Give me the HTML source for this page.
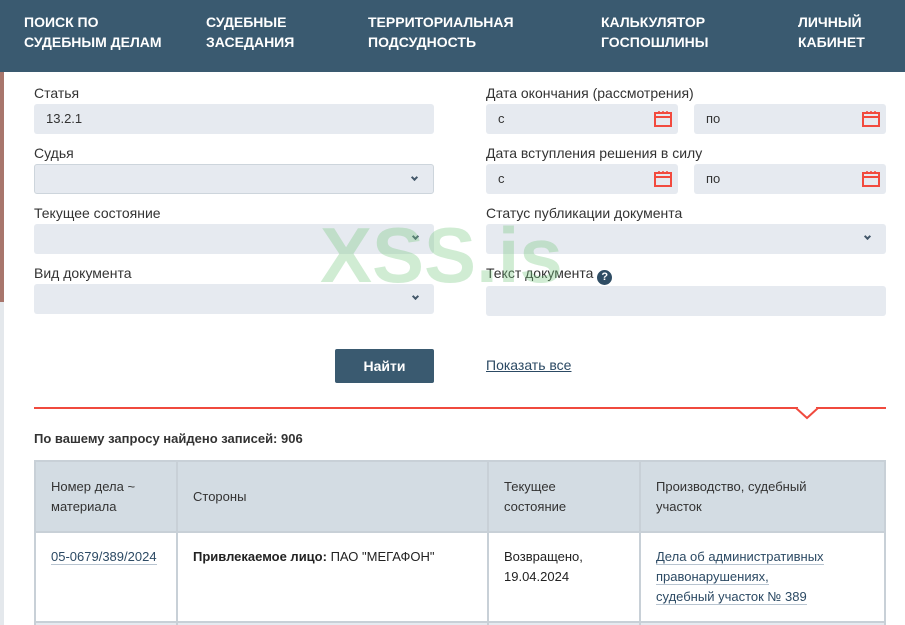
<!DOCTYPE html>
<html style="width:905px;height:625px;overflow:hidden"><head><meta charset="utf-8"><style>
*{box-sizing:border-box;margin:0;padding:0}
body{width:905px;height:625px;overflow:hidden;background:#fff;font-family:"Liberation Sans","DejaVu Sans",sans-serif;position:relative;color:#222}
.hdr{position:absolute;left:0;top:0;width:905px;height:72px;background:#3a5a70}
.nav{position:absolute;top:12px;color:#fff;font-weight:bold;font-size:14px;line-height:20px}
.strip{position:absolute;left:0;top:72px;width:4px;height:230px;background:#a8766c}
.strip2{position:absolute;left:0;top:302px;width:4px;height:323px;background:#e4e8ec}
.lbl{position:absolute;font-size:14px;color:#333}
.inp{position:absolute;height:30px;background:#e6eaf0;border-radius:3px;font-size:13px;line-height:30px;padding-left:12px;color:#333}
.chev{position:absolute;right:16px;top:10px;width:5px;height:5px;border-right:2px solid #44586a;border-bottom:2px solid #44586a;transform:rotate(45deg)}
.cal{position:absolute;right:6px;top:6px}
.btn{position:absolute;left:335px;top:349px;width:99px;height:34px;background:#3a5a70;color:#fff;font-weight:bold;font-size:14px;text-align:center;line-height:34px;border-radius:2px}
.wm{position:absolute;left:320px;top:210px;font-size:78px;font-weight:bold;color:rgba(120,200,130,.35);letter-spacing:0}
table{position:absolute;left:34px;top:460px;width:852px;border-collapse:collapse;font-size:13px;table-layout:fixed}
td,th{border:2px solid #c8d0d7;vertical-align:top;text-align:left}
th{background:#d3dce3;font-weight:normal;height:71px;padding:0 15px;vertical-align:middle;line-height:20px;color:#333}
td{height:89px;padding:14px 15px;line-height:20px}
td.e{background:#e6eaf0;height:30px;padding:0}
a{color:#2c4a64;text-decoration:none;border-bottom:1px solid #b8c4d0}
</style></head><body>
<div class="hdr"></div>
<div class="nav" style="left:24px">ПОИСК ПО<br>СУДЕБНЫМ ДЕЛАМ</div>
<div class="nav" style="left:206px">СУДЕБНЫЕ<br>ЗАСЕДАНИЯ</div>
<div class="nav" style="left:368px">ТЕРРИТОРИАЛЬНАЯ<br>ПОДСУДНОСТЬ</div>
<div class="nav" style="left:601px">КАЛЬКУЛЯТОР<br>ГОСПОШЛИНЫ</div>
<div class="nav" style="left:798px">ЛИЧНЫЙ<br>КАБИНЕТ</div>
<div class="strip"></div><div class="strip2"></div>

<div class="lbl" style="left:34px;top:85px">Статья</div>
<div class="inp" style="left:34px;top:104px;width:400px">13.2.1</div>
<div class="lbl" style="left:34px;top:145px">Судья</div>
<div class="inp" style="left:34px;top:164px;width:400px;border:1px solid #cdd5dc"><span class="chev"></span></div>
<div class="lbl" style="left:34px;top:205px">Текущее состояние</div>
<div class="inp" style="left:34px;top:224px;width:400px"><span class="chev"></span></div>
<div class="lbl" style="left:34px;top:265px">Вид документа</div>
<div class="inp" style="left:34px;top:284px;width:400px"><span class="chev"></span></div>

<div class="lbl" style="left:486px;top:85px">Дата окончания (рассмотрения)</div>
<div class="inp" style="left:486px;top:104px;width:192px">с<svg class="cal" width="18" height="18" viewBox="0 0 18 18"><rect x="1" y="3" width="16" height="13" fill="none" stroke="#f24a3e" stroke-width="2"/><line x1="1" y1="7" x2="17" y2="7" stroke="#f24a3e" stroke-width="2"/><path d="M5 1v3M9 1v3M13 1v3" stroke="#f24a3e" stroke-width="1.5"/></svg></div>
<div class="inp" style="left:694px;top:104px;width:192px">по<svg class="cal" width="18" height="18" viewBox="0 0 18 18"><rect x="1" y="3" width="16" height="13" fill="none" stroke="#f24a3e" stroke-width="2"/><line x1="1" y1="7" x2="17" y2="7" stroke="#f24a3e" stroke-width="2"/><path d="M5 1v3M9 1v3M13 1v3" stroke="#f24a3e" stroke-width="1.5"/></svg></div>
<div class="lbl" style="left:486px;top:145px">Дата вступления решения в силу</div>
<div class="inp" style="left:486px;top:164px;width:192px">с<svg class="cal" width="18" height="18" viewBox="0 0 18 18"><rect x="1" y="3" width="16" height="13" fill="none" stroke="#f24a3e" stroke-width="2"/><line x1="1" y1="7" x2="17" y2="7" stroke="#f24a3e" stroke-width="2"/><path d="M5 1v3M9 1v3M13 1v3" stroke="#f24a3e" stroke-width="1.5"/></svg></div>
<div class="inp" style="left:694px;top:164px;width:192px">по<svg class="cal" width="18" height="18" viewBox="0 0 18 18"><rect x="1" y="3" width="16" height="13" fill="none" stroke="#f24a3e" stroke-width="2"/><line x1="1" y1="7" x2="17" y2="7" stroke="#f24a3e" stroke-width="2"/><path d="M5 1v3M9 1v3M13 1v3" stroke="#f24a3e" stroke-width="1.5"/></svg></div>
<div class="lbl" style="left:486px;top:205px">Статус публикации документа</div>
<div class="inp" style="left:486px;top:224px;width:400px"><span class="chev"></span></div>
<div class="lbl" style="left:486px;top:265px">Текст документа <span style="display:inline-block;width:15px;height:15px;border-radius:50%;background:#2f4d64;color:#fff;font-size:11px;font-weight:bold;text-align:center;line-height:15px;vertical-align:-2px">?</span></div>
<div class="inp" style="left:486px;top:286px;width:400px"></div>

<div class="wm">XSS.is</div>

<div class="btn">Найти</div>
<div style="position:absolute;left:486px;top:357px;font-size:14px;color:#2c4a64;text-decoration:underline">Показать все</div>

<div style="position:absolute;left:34px;top:407px;width:852px;height:2px;background:#f04a3e"></div>
<svg style="position:absolute;left:795px;top:407px" width="24" height="13"><path d="M1 1 L12 11 L23 1" fill="#fff" stroke="#f04a3e" stroke-width="2"/><rect x="3" y="0" width="18" height="1.5" fill="#fff"/></svg>

<div style="position:absolute;left:34px;top:431px;font-size:13px;font-weight:bold;color:#333">По вашему запросу найдено записей: 906</div>

<table>
<colgroup><col style="width:142px"><col style="width:311px"><col style="width:152px"><col></colgroup>
<tr><th>Номер дела ~<br>материала</th><th>Стороны</th><th>Текущее<br>состояние</th><th>Производство, судебный<br>участок</th></tr>
<tr><td><a>05-0679/389/2024</a></td><td><b>Привлекаемое лицо:</b> ПАО "МЕГАФОН"</td><td>Возвращено,<br>19.04.2024</td><td><a>Дела об административных</a><br><a>правонарушениях,</a><br><a>судебный участок № 389</a></td></tr>
<tr><td class="e"></td><td class="e"></td><td class="e"></td><td class="e"></td></tr>
</table>
</body></html>
